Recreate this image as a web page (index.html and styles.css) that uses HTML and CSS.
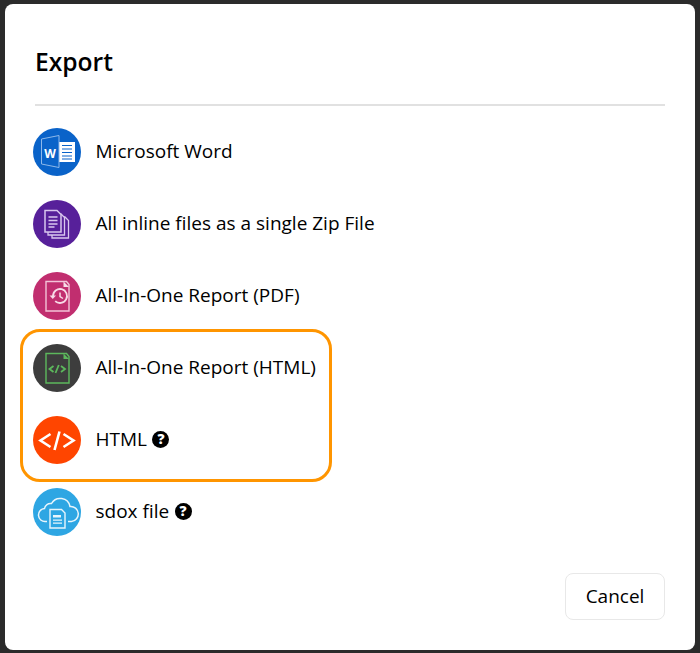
FILE: index.html
```html
<!DOCTYPE html>
<html lang="en">
<head>
<meta charset="utf-8">
<title>Export</title>
<link rel="stylesheet" href="styles.css">
</head>
<body>
<div class="dialog">
  <h1 class="title">Export</h1>
  <ul class="list">
    <li class="row">
      <svg class="icon" viewBox="0 0 48 48"><circle cx="24" cy="24" r="24" fill="#0a63c9"/><path d="M25 14h17v20H25z" fill="#fff"/><path d="M29 17.500h10M29 21h10M29 24.500h10M29 28h10M29 31h10" stroke="#0a63c9" stroke-width="1.100"/><path d="M8.500 11 26 7.500v32L8.500 36z" fill="#0a63c9" stroke="#8db8ea" stroke-width="1"/><text class="word" x="17" y="29.500">W</text></svg>
      <span class="label">Microsoft Word</span>
    </li>
    <li class="row">
      <svg class="icon" viewBox="0 0 48 48"><circle cx="24" cy="24" r="24" fill="#57209a"/><g fill="#57209a" stroke="#d9c6ee" stroke-width="1.300"><path d="M19 17h13l3.500 3.500V38H19z"/><path d="M15 14h13l3.500 3.500V35H15z"/><path d="M12 10.500h12l4 4V32H12z" stroke-width="1.500"/></g><path d="M15.500 17h9M15.500 20.500h9M15.500 24h9M15.500 27h6" stroke="#d9c6ee" stroke-width="1.300"/></svg>
      <span class="label">All inline files as a single Zip File</span>
    </li>
    <li class="row">
      <svg class="icon" viewBox="0 0 48 48"><circle cx="24" cy="24" r="24" fill="#c12e6f"/><path d="M13 9.500h20.500l2.500 3V39H13z" fill="none" stroke="#f3c3d8" stroke-width="1.400"/><path d="M30.500 9.500v5.500H36z" fill="#f7dbe7"/><path d="M20 24a7 7 0 1 1 2.200 5.100" fill="none" stroke="#f7dbe7" stroke-width="1.800"/><path d="M16.500 23.500h6.500l-3.200 3.500z" fill="#f7dbe7"/><path d="M27 20.500v4l3 2" fill="none" stroke="#f7dbe7" stroke-width="1.500"/></svg>
      <span class="label">All-In-One Report (PDF)</span>
    </li>
    <li class="row">
      <svg class="icon" viewBox="0 0 48 48"><circle cx="24" cy="24" r="24" fill="#3d3d3d"/><path d="M13 9.500h20.500l2.500 3V39H13z" fill="none" stroke="#5cb85c" stroke-width="1.400"/><path d="M30.500 9.500v5.500H36z" fill="#5cb85c"/><path d="M20.500 22 16.500 25l4 3M28 22l4 3-4 3M25.800 21l-3.300 8" fill="none" stroke="#5cb85c" stroke-width="1.800"/></svg>
      <span class="label">All-In-One Report (HTML)</span>
    </li>
    <li class="row">
      <svg class="icon" viewBox="0 0 48 48"><circle cx="24" cy="24" r="24" fill="#ff4500"/><path d="M17.500 18 7.500 24.500l10 6.500M30.500 18l10 6.500-10 6.500M26.500 15.500 21.500 34" fill="none" stroke="#fff" stroke-width="2.600"/></svg>
      <span class="label">HTML</span>
      <span class="help">?</span>
    </li>
    <li class="row">
      <svg class="icon" viewBox="0 0 48 48"><circle cx="24" cy="24" r="24" fill="#2ea6e3"/><path d="M14 33.500h-1.500a6.500 6.500 0 0 1-1-13 6 6 0 0 1 7-5 10 10 0 0 1 18.500 3 7.500 7.500 0 0 1 1.500 15H35" fill="none" stroke="#e8f5fc" stroke-width="1.500"/><path d="M17 21.500h11.500l3.500 3.500v15H17z" fill="#2ea6e3" stroke="#e8f5fc" stroke-width="1.400"/><path d="M20 27h8v2.500h-8zM20 31.500h9v1.300h-9zM20 34.500h9v1.300h-9z" fill="#e8f5fc"/></svg>
      <span class="label">sdox file</span>
      <span class="help">?</span>
    </li>
  </ul>
  <div class="actions">
    <button class="cancel" type="button">Cancel</button>
  </div>
  <div class="highlight"></div>
</div>
</body>
</html>
```

FILE: styles.css
```css
* {
  box-sizing: border-box;
}

html,
body {
  height: 100%;
}

body {
  margin: 0;
  padding: 4px 5px 3px;
  background: #2b2b2b;
  color: #000;
  font-family: "Open Sans", "Noto Sans", sans-serif;
  overflow: hidden;
}

.dialog {
  position: relative;
  height: 646px;
  padding: 0 30px;
  background: #fff;
  border-radius: 8px;
}

.title {
  margin: 0;
  height: 102px;
  padding-top: 40px;
  border-bottom: 2px solid #e1e1e1;
  font-size: 24.6px;
  line-height: 36px;
  font-weight: 600;
}

.list {
  list-style: none;
  margin: 0;
  padding: 10px 0 0;
}

.row {
  display: flex;
  align-items: center;
  height: 72px;
  margin-left: -2px;
}

.icon {
  flex: none;
  width: 48px;
  height: 48px;
  margin-right: 14.5px;
}

.word {
  font-family: "Open Sans", sans-serif;
  font-size: 12px;
  font-weight: 700;
  fill: #fff;
  text-anchor: middle;
}

.label {
  position: relative;
  top: -1px;
  font-size: 19px;
  line-height: 24px;
}

.help {
  display: flex;
  align-items: center;
  justify-content: center;
  width: 17px;
  height: 17px;
  margin: -2px 0 0 5.5px;
  border-radius: 50%;
  background: #000;
  color: #fff;
  font-size: 14px;
  font-weight: 800;
  line-height: 1;
}

.actions {
  display: flex;
  justify-content: flex-end;
  margin-top: 25px;
}

.cancel {
  width: 100px;
  height: 47px;
  padding: 0 0 2px;
  background: #fff;
  border: 1px solid #e8e8e8;
  border-radius: 8px;
  color: #000;
  font-family: inherit;
  font-size: 19px;
}

.highlight {
  position: absolute;
  left: 15px;
  top: 325px;
  width: 312px;
  height: 153px;
  border: 3px solid #ff9500;
  border-radius: 20px;
  pointer-events: none;
}
```
